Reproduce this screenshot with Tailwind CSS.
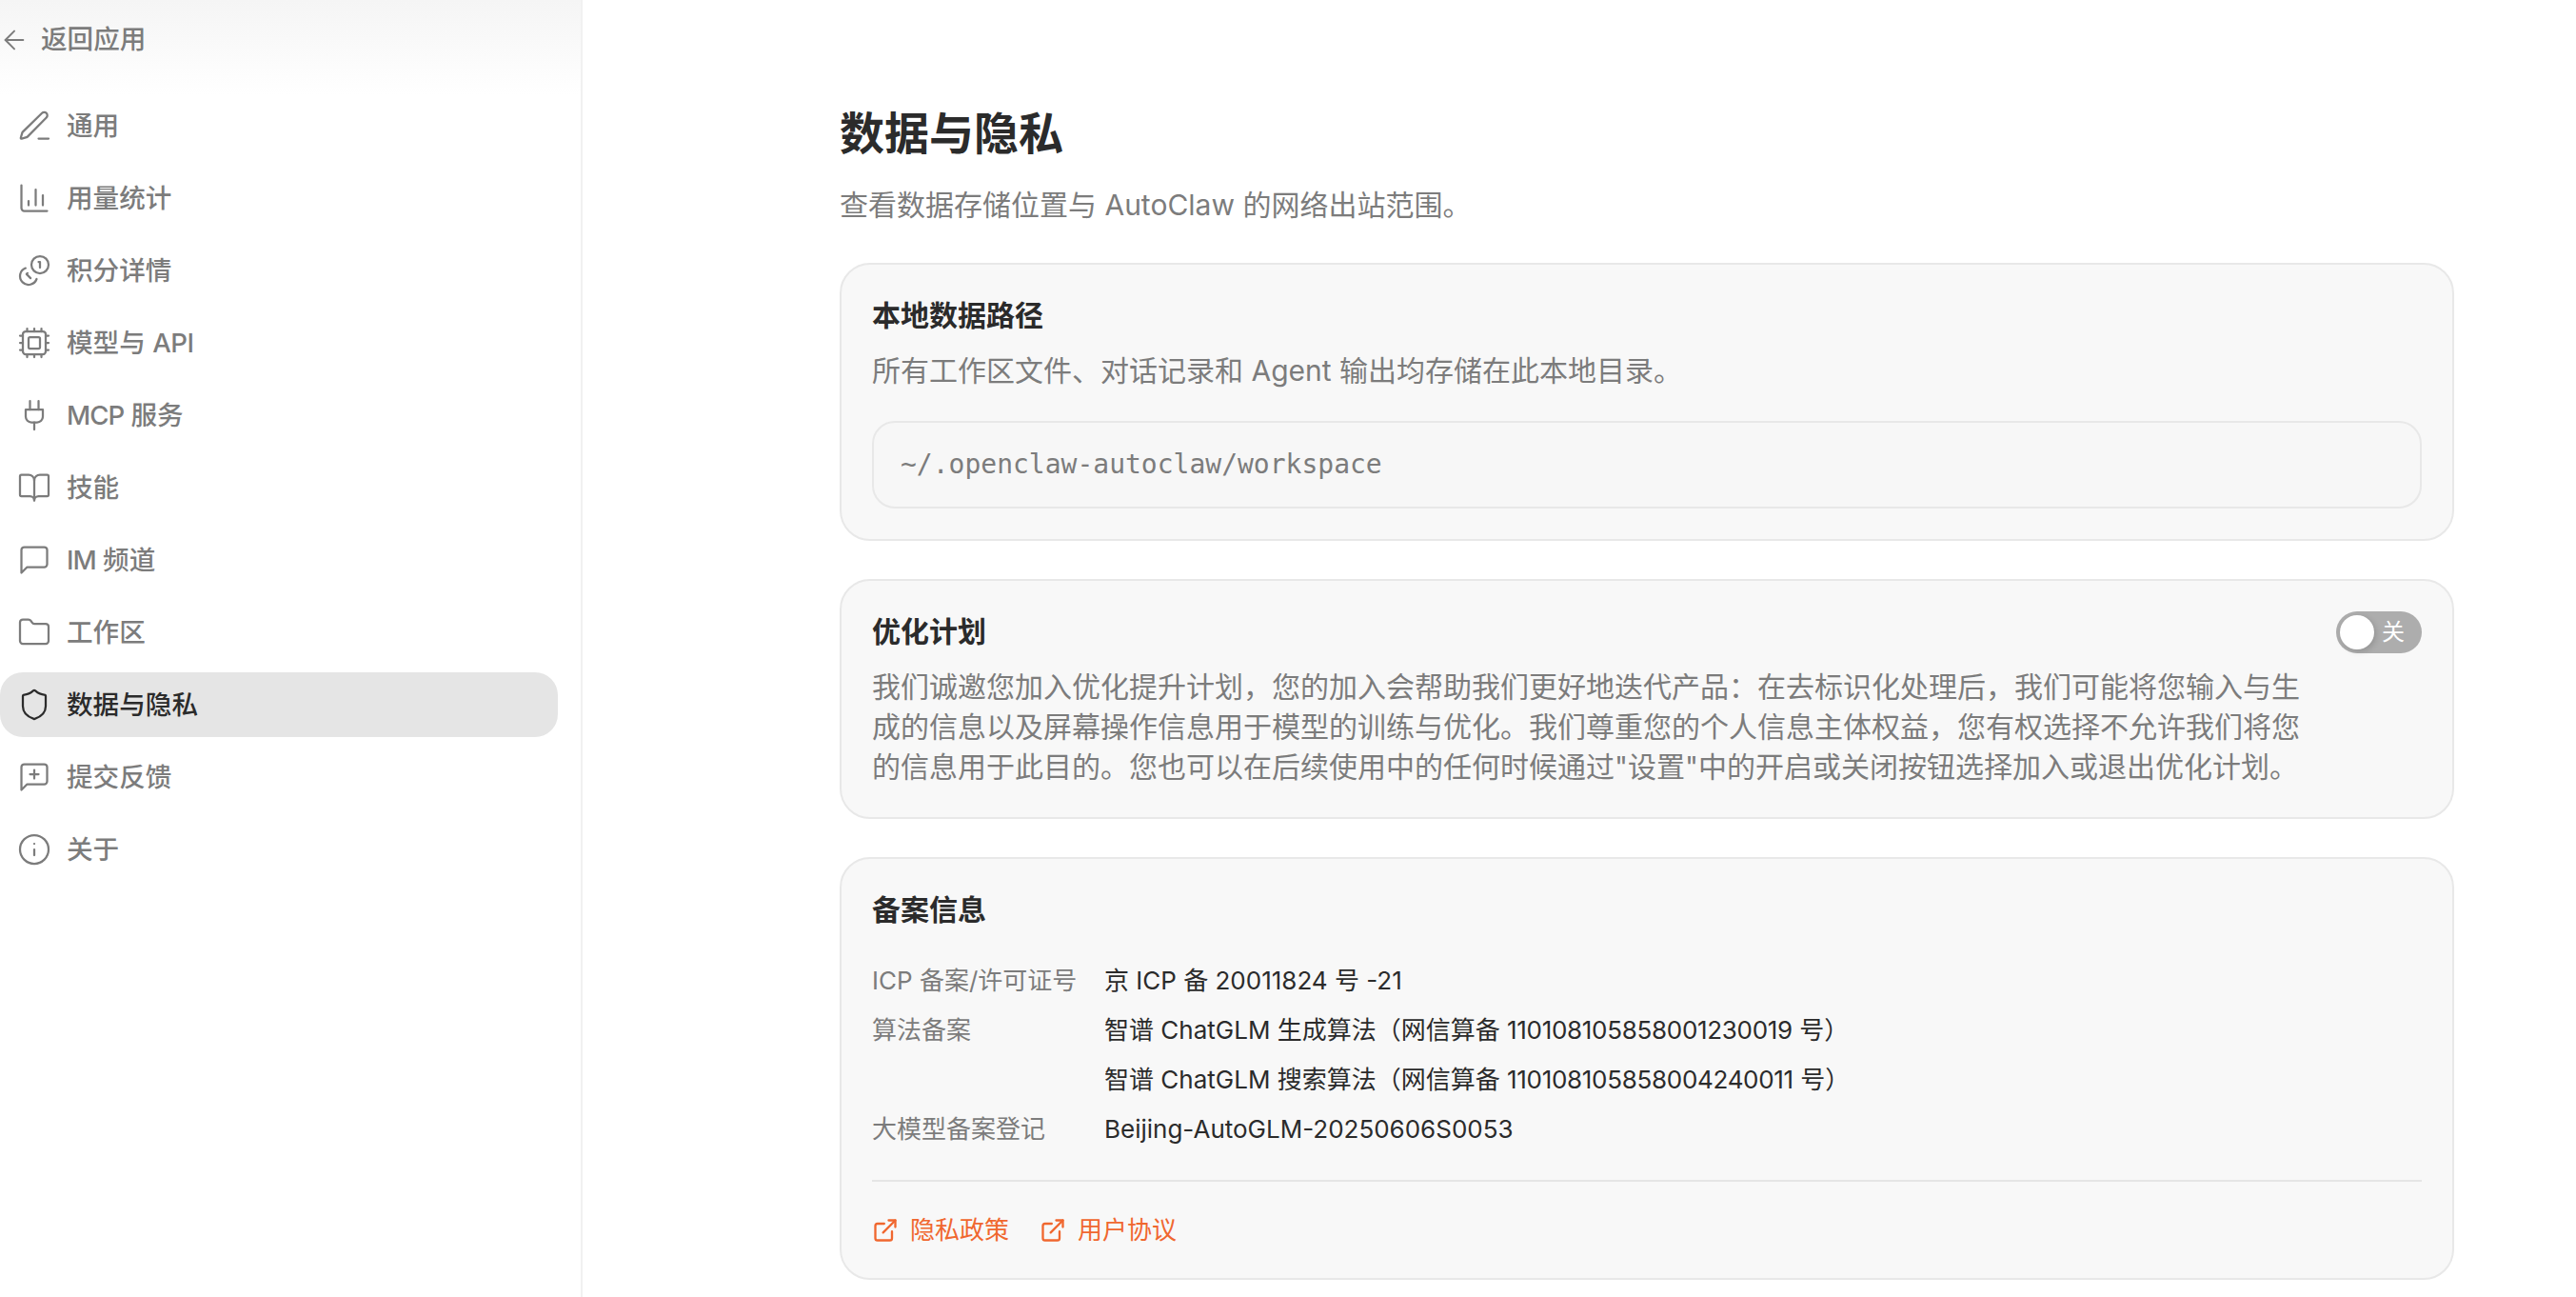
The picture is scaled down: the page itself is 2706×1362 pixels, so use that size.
<!DOCTYPE html>
<html lang="zh-CN">
<head>
    <meta charset="UTF-8">
    <meta name="viewport" content="width=device-width, initial-scale=1.0">
    <title>数据与隐私</title>
    <script src="https://cdn.jsdelivr.net/npm/@tailwindcss/browser@4"></script>
</head>
<body class="h-[1362px] overflow-hidden bg-white font-['Inter','Noto_Sans_CJK_SC',sans-serif] text-[#2b2b2b]">
    <div class="flex h-full">
        <!-- Sidebar -->
        <aside class="w-[612px] shrink-0 border-r-2 border-[#f1f1f1] pr-[24px] relative">
            <div class="absolute inset-x-0 top-0 h-[100px] bg-gradient-to-b from-[#f5f5f5] to-white"></div>
            <a class="relative flex h-[84px] items-center gap-3 text-[27.6px] font-medium text-[#7c7c7c]">
                <svg class="-ml-px" width="32" height="32" viewBox="0 0 24 24" fill="none" stroke="currentColor" stroke-width="1.5" stroke-linecap="round" stroke-linejoin="round"><path d="m12 19-7-7 7-7"/><path d="M19 12H5"/></svg>
                返回应用
            </a>
            <nav class="relative mt-[14px] flex flex-col gap-2 text-[27.6px] leading-[40px] font-medium text-[#7c7c7c]">
                <a class="flex h-[68px] items-center gap-4 pl-[18px]">
                    <svg width="36" height="36" viewBox="0 0 24 24" fill="none" stroke="currentColor" stroke-width="1.5" stroke-linecap="round" stroke-linejoin="round"><path d="M15 21h7"/><path d="M17.4 3.2a1.9 1.9 0 0 1 3.1 3.1L7.4 19.6a2 2 0 0 1-.85.5l-3.4 1a.5.5 0 0 1-.62-.62l1-3.4a2 2 0 0 1 .5-.85z"/></svg>
                    通用
                </a>
                <a class="flex h-[68px] items-center gap-4 pl-[18px]">
                    <svg width="36" height="36" viewBox="0 0 24 24" fill="none" stroke="currentColor" stroke-width="1.5" stroke-linecap="round" stroke-linejoin="round"><path d="M3 3v16a2 2 0 0 0 2 2h16"/><path d="M8 17v-3"/><path d="M13 17V6"/><path d="M18 17v-7"/></svg>
                    用量统计
                </a>
                <a class="flex h-[68px] items-center gap-4 pl-[18px]">
                    <svg width="36" height="36" viewBox="0 0 24 24" fill="none" stroke="currentColor" stroke-width="1.5" stroke-linecap="round" stroke-linejoin="round"><circle cx="16" cy="8" r="6"/><path d="M5.91 10.37A6 6 0 1 0 13.66 18"/><path d="M15 6h1v4"/><path d="m7.29 13.88-.7.71 2.82 2.82"/></svg>
                    积分详情
                </a>
                <a class="flex h-[68px] items-center gap-4 pl-[18px]">
                    <svg width="36" height="36" viewBox="0 0 24 24" fill="none" stroke="currentColor" stroke-width="1.5" stroke-linecap="round" stroke-linejoin="round"><path d="M12 20v2"/><path d="M12 2v2"/><path d="M17 20v2"/><path d="M17 2v2"/><path d="M2 12h2"/><path d="M2 17h2"/><path d="M2 7h2"/><path d="M20 12h2"/><path d="M20 17h2"/><path d="M20 7h2"/><path d="M7 20v2"/><path d="M7 2v2"/><rect x="4" y="4" width="16" height="16" rx="2"/><rect x="8" y="8" width="8" height="8" rx="1"/></svg>
                    <span>模型与 <span class="tracking-[-0.5px]">API</span></span>
                </a>
                <a class="flex h-[68px] items-center gap-4 pl-[18px]">
                    <svg width="36" height="36" viewBox="0 0 24 24" fill="none" stroke="currentColor" stroke-width="1.5" stroke-linecap="round" stroke-linejoin="round"><path d="M12 22v-5"/><path d="M9 8V2"/><path d="M15 8V2"/><path d="M18 8v5a4 4 0 0 1-4 4h-4a4 4 0 0 1-4-4V8Z"/></svg>
                    <span><span class="tracking-[-1px]">MCP</span> 服务</span>
                </a>
                <a class="flex h-[68px] items-center gap-4 pl-[18px]">
                    <svg width="36" height="36" viewBox="0 0 24 24" fill="none" stroke="currentColor" stroke-width="1.5" stroke-linecap="round" stroke-linejoin="round"><path d="M12 7v14"/><path d="M3 18a1 1 0 0 1-1-1V4a1 1 0 0 1 1-1h5a4 4 0 0 1 4 4 4 4 0 0 1 4-4h5a1 1 0 0 1 1 1v13a1 1 0 0 1-1 1h-6a3 3 0 0 0-3 3 3 3 0 0 0-3-3z"/></svg>
                    技能
                </a>
                <a class="flex h-[68px] items-center gap-4 pl-[18px]">
                    <svg width="36" height="36" viewBox="0 0 24 24" fill="none" stroke="currentColor" stroke-width="1.5" stroke-linecap="round" stroke-linejoin="round"><path d="M21 15a2 2 0 0 1-2 2H7l-4 4V5a2 2 0 0 1 2-2h14a2 2 0 0 1 2 2z"/></svg>
                    <span><span class="tracking-[-1px]">IM</span> 频道</span>
                </a>
                <a class="flex h-[68px] items-center gap-4 pl-[18px]">
                    <svg width="36" height="36" viewBox="0 0 24 24" fill="none" stroke="currentColor" stroke-width="1.5" stroke-linecap="round" stroke-linejoin="round"><path d="M20 20a2 2 0 0 0 2-2V8a2 2 0 0 0-2-2h-7.9a2 2 0 0 1-1.69-.9L9.6 3.9A2 2 0 0 0 7.93 3H4a2 2 0 0 0-2 2v13a2 2 0 0 0 2 2Z"/></svg>
                    工作区
                </a>
                <a class="flex h-[68px] items-center gap-4 rounded-[24px] bg-[#e5e5e5] pl-[18px] text-[#2b2b2b]">
                    <svg width="36" height="36" viewBox="0 0 24 24" fill="none" stroke="currentColor" stroke-width="1.5" stroke-linecap="round" stroke-linejoin="round"><path d="M20 13c0 5-3.5 7.5-7.66 8.95a1 1 0 0 1-.67-.01C7.5 20.5 4 18 4 13V6a1 1 0 0 1 1-1c2 0 4.5-1.2 6.24-2.72a1.17 1.17 0 0 1 1.52 0C14.51 3.81 17 5 19 5a1 1 0 0 1 1 1z"/></svg>
                    数据与隐私
                </a>
                <a class="flex h-[68px] items-center gap-4 pl-[18px]">
                    <svg width="36" height="36" viewBox="0 0 24 24" fill="none" stroke="currentColor" stroke-width="1.5" stroke-linecap="round" stroke-linejoin="round"><path d="M21 15a2 2 0 0 1-2 2H7l-4 4V5a2 2 0 0 1 2-2h14a2 2 0 0 1 2 2z"/><path d="M12 7v6"/><path d="M9 10h6"/></svg>
                    提交反馈
                </a>
                <a class="flex h-[68px] items-center gap-4 pl-[18px]">
                    <svg width="36" height="36" viewBox="0 0 24 24" fill="none" stroke="currentColor" stroke-width="1.5" stroke-linecap="round" stroke-linejoin="round"><circle cx="12" cy="12" r="10"/><path d="M12 16v-4"/><path d="M12 8h.01"/></svg>
                    关于
                </a>
            </nav>
        </aside>

        <!-- Main -->
        <main class="w-[1696px] ml-[270px] pt-[110px]">
            <h1 class="text-[47px] leading-[60px] font-bold text-[#2b2b2b]">数据与隐私</h1>
            <p class="mt-6 text-[30px] leading-[42px] text-[#7c7c7c]">查看数据存储位置与 AutoClaw 的网络出站范围。</p>

            <section class="mt-10 rounded-[32px] border-2 border-[#e8e8e8] bg-[#f8f8f8] p-8">
                <h2 class="text-[30px] leading-[42px] font-semibold text-[#2b2b2b]">本地数据路径</h2>
                <p class="mt-4 text-[30px] leading-[42px] text-[#7c7c7c]">所有工作区文件、对话记录和 Agent 输出均存储在此本地目录。</p>
                <div class="mt-8 flex h-[92px] items-center rounded-[24px] border-2 border-[#e8e8e8] bg-[#f7f7f7] px-[28px] font-['DejaVu_Sans_Mono',monospace] text-[28px] text-[#7c7c7c]">~/.openclaw-autoclaw/workspace</div>
            </section>

            <section class="mt-10 rounded-[32px] border-2 border-[#e8e8e8] bg-[#f8f8f8] p-8">
                <div class="flex items-start justify-between">
                    <h2 class="text-[30px] leading-[42px] font-semibold text-[#2b2b2b]">优化计划</h2>
                    <div class="relative flex h-[44px] w-[90px] items-center justify-end rounded-full bg-[#adadad] pr-[18px] text-[24px] text-white">
                        <span class="absolute left-[4px] top-[4px] size-[36px] rounded-full bg-white shadow-[2px_2px_6px_rgba(0,0,0,0.15)]"></span>
                        关
                    </div>
                </div>
                <p class="mt-[14px] w-[1510px] text-[30px] leading-[42px] text-[#7c7c7c]">我们诚邀您加入优化提升计划，您的加入会帮助我们更好地迭代产品：在去标识化处理后，我们可能将您输入与生成的信息以及屏幕操作信息用于模型的训练与优化。我们尊重您的个人信息主体权益，您有权选择不允许我们将您的信息用于此目的。您也可以在后续使用中的任何时候通过"设置"中的开启或关闭按钮选择加入或退出优化计划。</p>
            </section>

            <section class="mt-10 rounded-[32px] border-2 border-[#e8e8e8] bg-[#f8f8f8] p-8">
                <h2 class="text-[30px] leading-[42px] font-semibold text-[#2b2b2b]">备案信息</h2>
                <dl class="mt-9 grid grid-cols-[244px_1fr] gap-y-4 text-[26px] leading-[36px]">
                    <dt class="text-[#7c7c7c]">ICP 备案/许可证号</dt>
                    <dd class="text-[#2b2b2b]">京 ICP 备 20011824 号 -21</dd>
                    <dt class="text-[#7c7c7c]">算法备案</dt>
                    <dd class="text-[#2b2b2b]">智谱 ChatGLM 生成算法（网信算备 <span class="tracking-[-0.3px]">110108105858001230019</span> 号）</dd>
                    <dt></dt>
                    <dd class="text-[#2b2b2b]">智谱 ChatGLM 搜索算法（网信算备 <span class="tracking-[-0.3px]">110108105858004240011</span> 号）</dd>
                    <dt class="text-[#7c7c7c]">大模型备案登记</dt>
                    <dd class="text-[#2b2b2b]">Beijing-AutoGLM-20250606S0053</dd>
                </dl>
                <div class="mt-[35px] flex gap-[32px] border-t-2 border-[#e5e5e5] pt-[33px] text-[26px] leading-[36px] text-[#f0672f]">
                    <a class="flex items-center gap-[12px]">
                        <svg width="28" height="28" viewBox="0 0 24 24" fill="none" stroke="currentColor" stroke-width="2" stroke-linecap="round" stroke-linejoin="round"><path d="M15 3h6v6"/><path d="M10 14 21 3"/><path d="M18 13v6a2 2 0 0 1-2 2H5a2 2 0 0 1-2-2V8a2 2 0 0 1 2-2h6"/></svg>
                        隐私政策
                    </a>
                    <a class="flex items-center gap-[12px]">
                        <svg width="28" height="28" viewBox="0 0 24 24" fill="none" stroke="currentColor" stroke-width="2" stroke-linecap="round" stroke-linejoin="round"><path d="M15 3h6v6"/><path d="M10 14 21 3"/><path d="M18 13v6a2 2 0 0 1-2 2H5a2 2 0 0 1-2-2V8a2 2 0 0 1 2-2h6"/></svg>
                        用户协议
                    </a>
                </div>
            </section>
        </main>
    </div>
</body>
</html>
